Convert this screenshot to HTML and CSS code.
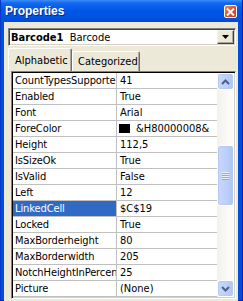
FILE: index.html
```html
<!DOCTYPE html>
<html lang="en">
  <head>
    <meta charset="UTF-8">
    <title>Properties</title>
    <link rel="stylesheet" href="styles.css">
  </head>
  <body>
    <div class="window">
      <div class="titlebar">
        <span class="title">Properties</span>
        <span class="close">
          <svg width="9" height="8" viewBox="0 0 9 8"><path d="M1 0.5 L8 7.5 M8 0.5 L1 7.5" stroke="#fff" stroke-width="2"/></svg>
        </span>
      </div>

      <div class="client">
        <div class="combo">
          <div class="combo-text"><b>Barcode1</b>&nbsp;&nbsp;Barcode</div>
          <div class="combo-btn">
            <svg width="7" height="4" viewBox="0 0 7 4"><path d="M0 0 H7 L3.5 4 Z" fill="#000"/></svg>
          </div>
        </div>

        <div class="tabs">
          <div class="tab active">Alphabetic</div>
          <div class="tab">Categorized</div>
        </div>

        <div class="list">
          <div class="rows">
            <div class="row"><div class="name">CountTypesSupporte</div><div class="value">41</div></div>
            <div class="row"><div class="name">Enabled</div><div class="value">True</div></div>
            <div class="row"><div class="name">Font</div><div class="value">Arial</div></div>
            <div class="row"><div class="name">ForeColor</div><div class="value"><span class="swatch"></span>&amp;H80000008&amp;</div></div>
            <div class="row"><div class="name">Height</div><div class="value">112,5</div></div>
            <div class="row"><div class="name">IsSizeOk</div><div class="value">True</div></div>
            <div class="row"><div class="name">IsValid</div><div class="value">False</div></div>
            <div class="row"><div class="name">Left</div><div class="value">12</div></div>
            <div class="row selected"><div class="name">LinkedCell</div><div class="value">$C$19</div></div>
            <div class="row"><div class="name">Locked</div><div class="value">True</div></div>
            <div class="row"><div class="name">MaxBorderheight</div><div class="value">80</div></div>
            <div class="row"><div class="name">MaxBorderwidth</div><div class="value">205</div></div>
            <div class="row"><div class="name">NotchHeightInPercen</div><div class="value">25</div></div>
            <div class="row"><div class="name">Picture</div><div class="value">(None)</div></div>
          </div>

          <div class="vscroll">
            <div class="sbtn">
              <svg width="9" height="6" viewBox="0 0 9 6"><path d="M1 5 L4.5 1.5 L8 5" fill="none" stroke="#4d6185" stroke-width="2"/></svg>
            </div>
            <div class="track">
              <div class="thumb">
                <span class="grip"></span><span class="grip"></span><span class="grip"></span><span class="grip"></span>
              </div>
            </div>
            <div class="sbtn">
              <svg width="9" height="6" viewBox="0 0 9 6"><path d="M1 1 L4.5 4.5 L8 1" fill="none" stroke="#4d6185" stroke-width="2"/></svg>
            </div>
          </div>
        </div>
      </div>
    </div>
  </body>
</html>
```

FILE: styles.css
```css
* { box-sizing: border-box; }

body {
  margin: 0;
  font-family: "DejaVu Sans Condensed", "Liberation Sans", sans-serif;
  font-size: 11px;
  color: #000;
}

.window {
  width: 243px;
  height: 301px;
  display: flex;
  flex-direction: column;
  background: #0050e0;
  border-left: 1px solid #0838c8;
  border-right: 1px solid #0020a8;
  border-bottom: 1px solid #0020a8;
}

/* TITLE BAR */
.titlebar {
  height: 22px;
  flex: none;
  display: flex;
  align-items: center;
  justify-content: space-between;
  padding: 0 5px 1px 4px;
  background: linear-gradient(#3d8ef8 0, #1468f0 3px, #0058e8 10px, #0052e0 18px, #0048d4 22px);
}

.title {
  font-family: "Liberation Sans", sans-serif;
  font-weight: bold;
  font-size: 12px;
  color: #fff;
  text-shadow: 1px 1px 0 #0a2a80;
}

.close {
  width: 13px;
  height: 13px;
  margin-top: 2px;
  display: flex;
  align-items: center;
  justify-content: center;
  border: 1px solid #fff;
  border-radius: 2px;
  background: linear-gradient(135deg, #f08a6a, #e0502a 50%, #c83a18);
}

/* CLIENT */
.client {
  flex: 1;
  display: flex;
  flex-direction: column;
  margin: 0 4px 4px 3px;
  background: #ece9d8;
  padding: 6px 2px 3px 4px;
}

.combo {
  height: 18px;
  display: flex;
  align-items: stretch;
  background: #fff;
  border-top: 1px solid #808080;
  border-left: 1px solid #808080;
  border-right: 1px solid #fff;
  border-bottom: 1px solid #fff;
  box-shadow: inset 1px 1px 0 #404040, inset -1px -1px 0 #d4d0c8;
}

.combo-text {
  flex: 1;
  padding: 2px 0 0 2px;
  white-space: nowrap;
}

.combo-btn {
  width: 17px;
  margin: 1px 1px 1px 0;
  display: flex;
  align-items: center;
  justify-content: center;
  background: #ece9d8;
  border-top: 1px solid #f4f3ee;
  border-left: 1px solid #f4f3ee;
  border-right: 1px solid #404040;
  border-bottom: 1px solid #404040;
  box-shadow: inset -1px -1px 0 #aca899;
}

/* TABS */
.tabs {
  height: 25px;
  display: flex;
  align-items: flex-end;
}

.tab {
  height: 20px;
  padding: 3px 0 0 5px;
  width: 68px;
  border-top: 1px solid #fff;
  border-left: 1px solid #fff;
  border-right: 1px solid #716f64;
  border-top-left-radius: 2px;
  border-top-right-radius: 2px;
  box-shadow: inset -1px 0 0 #aca899;
}

.tab.active {
  height: 23px;
  width: 64px;
  padding: 5px 0 0 6px;
}

/* PROPERTY LIST */
.list {
  flex: 1;
  display: flex;
  margin: 0 0 2px 3px;
  border-top: 1px solid #808080;
  border-left: 1px solid #808080;
  border-right: 1px solid #fff;
  border-bottom: 1px solid #fff;
  padding: 1px;
  box-shadow: inset 1px 1px 0 #000, inset -1px -1px 0 #d4d0c8;
  background: #fff;
  overflow: hidden;
}

.rows {
  flex: 1;
  overflow: hidden;
}

.row {
  height: 16px;
  display: flex;
  border-bottom: 1px solid #c0c0c0;
}

.name {
  width: 104px;
  padding: 1px 0 0 2px;
  border-right: 1px solid #c0c0c0;
  white-space: nowrap;
  overflow: hidden;
  letter-spacing: -0.1px;
}

.value {
  flex: 1;
  padding: 1px 0 0 3px;
  display: flex;
  align-items: center;
  align-self: flex-start;
  white-space: nowrap;
}

.row.selected .name {
  background: #316ac5;
  color: #fff;
}

.swatch {
  width: 11px;
  height: 9px;
  margin: 0 6px 0 -1px;
  background: #000;
}

/* SCROLLBAR */
.vscroll {
  width: 17px;
  display: flex;
  flex-direction: column;
  background: linear-gradient(to right, #f3f1ec, #fefefb);
}

.sbtn, .thumb {
  border: 1px solid #fff;
  border-radius: 3px;
  background: linear-gradient(to right, #c8d8fb, #bacffa 60%, #aec4f4);
  box-shadow: inset 0 0 0 1px #b6c9f3;
  display: flex;
  align-items: center;
  justify-content: center;
}

.sbtn {
  height: 17px;
  flex: none;
}

.track {
  flex: 1;
  padding-top: 55px;
}

.thumb {
  height: 61px;
  flex-direction: column;
  gap: 1px;
}

.grip {
  width: 7px;
  height: 1px;
  background: #eef3fe;
  box-shadow: 0 1px 0 #8ca6e0;
}
```
